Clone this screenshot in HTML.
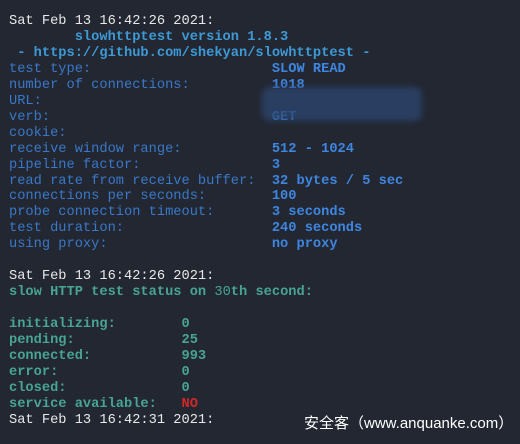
<!DOCTYPE html><html><head><style>
body{margin:0;width:520px;height:440px;background:#222732;overflow:hidden;position:relative;font-family:"Liberation Mono",monospace;font-size:13.7px;}
#w{position:absolute;left:0;top:4px;width:520px;height:440px}
.l{position:absolute;left:9px;white-space:pre;line-height:16px;}
.w{color:#e8e8e8}.c{color:#3d9ad6;font-weight:bold}.b{color:#3a78c8}.v{color:#3f86e0;font-weight:bold}.g{color:#48a495;font-weight:bold}.r{color:#d02828;font-weight:bold}
.blob{position:absolute;left:262px;top:83px;width:160px;height:34px;background:#2c4670;border-radius:8px;filter:blur(3px);opacity:.75}
.wm{position:absolute;left:304px;top:408px;color:#fff;font-family:"Liberation Sans","Noto Sans CJK SC",sans-serif;font-size:15px}
</style></head><body><div id="w">
<div class="l w" style="top:10px">Sat Feb 13 16:42:26 2021:</div>
<div class="l c" style="top:26px">        slowhttptest version 1.8.3</div>
<div class="l c" style="top:42px"> - https://github.com/shekyan/slowhttptest -</div>
<div class="l" style="top:58px"><span class="b">test type:                      </span><span class="v">SLOW READ</span></div>
<div class="l" style="top:74px"><span class="b">number of connections:          </span><span class="v">1018</span></div>
<div class="l" style="top:90px"><span class="b">URL:</span></div>
<div class="l" style="top:106px"><span class="b">verb:                           </span><span class="v">GET</span></div>
<div class="l" style="top:122px"><span class="b">cookie:</span></div>
<div class="l" style="top:138px"><span class="b">receive window range:           </span><span class="v">512 - 1024</span></div>
<div class="l" style="top:154px"><span class="b">pipeline factor:                </span><span class="v">3</span></div>
<div class="l" style="top:170px"><span class="b">read rate from receive buffer:  </span><span class="v">32 bytes / 5 sec</span></div>
<div class="l" style="top:185px"><span class="b">connections per seconds:        </span><span class="v">100</span></div>
<div class="l" style="top:201px"><span class="b">probe connection timeout:       </span><span class="v">3 seconds</span></div>
<div class="l" style="top:217px"><span class="b">test duration:                  </span><span class="v">240 seconds</span></div>
<div class="l" style="top:233px"><span class="b">using proxy:                    </span><span class="v">no proxy</span></div>
<div class="blob"></div>
<div class="l w" style="top:265px">Sat Feb 13 16:42:26 2021:</div>
<div class="l g" style="top:281px">slow HTTP test status on <span style="font-weight:normal">30</span>th second:</div>
<div class="l g" style="top:313px">initializing:        0</div>
<div class="l g" style="top:329px">pending:             25</div>
<div class="l g" style="top:345px">connected:           993</div>
<div class="l g" style="top:361px">error:               0</div>
<div class="l g" style="top:377px">closed:              0</div>
<div class="l g" style="top:393px">service available:   <span class="r">NO</span></div>
<div class="l w" style="top:409px">Sat Feb 13 16:42:31 2021:</div>
<div class="wm">安全客（www.anquanke.com）</div>
</div></body></html>
